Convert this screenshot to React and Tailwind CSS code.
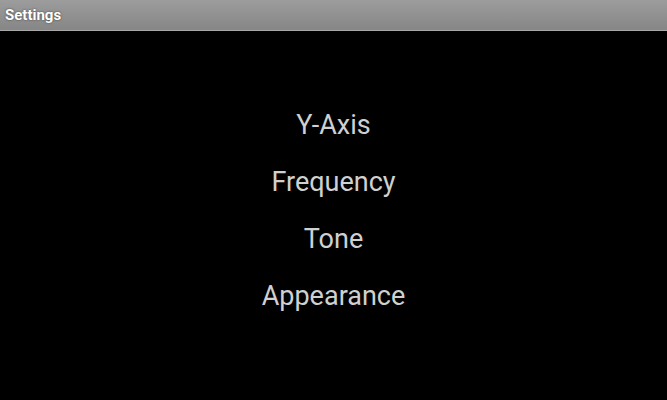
import React from 'react';

const items = ['Y-Axis', 'Frequency', 'Tone', 'Appearance'];

function App() {
    return (
        <div className="w-[667px] h-[400px] bg-black flex flex-col font-['Roboto',sans-serif]">
            <div className="h-[31px] bg-gradient-to-b from-[#9c9c9c] to-[#868686] border-b border-[#a8a8a8] flex items-center px-[5px]">
                <span className="text-white font-bold text-[15px] [text-shadow:0_0_2px_#333]">Settings</span>
            </div>
            <div className="flex flex-col items-center pt-[77px] gap-[23px]">
                {items.map(item => (
                    <div key={item} className="text-[#d0d0d0] text-[27px] leading-[34px]">{item}</div>
                ))}
            </div>
        </div>
    )
}

export default App
